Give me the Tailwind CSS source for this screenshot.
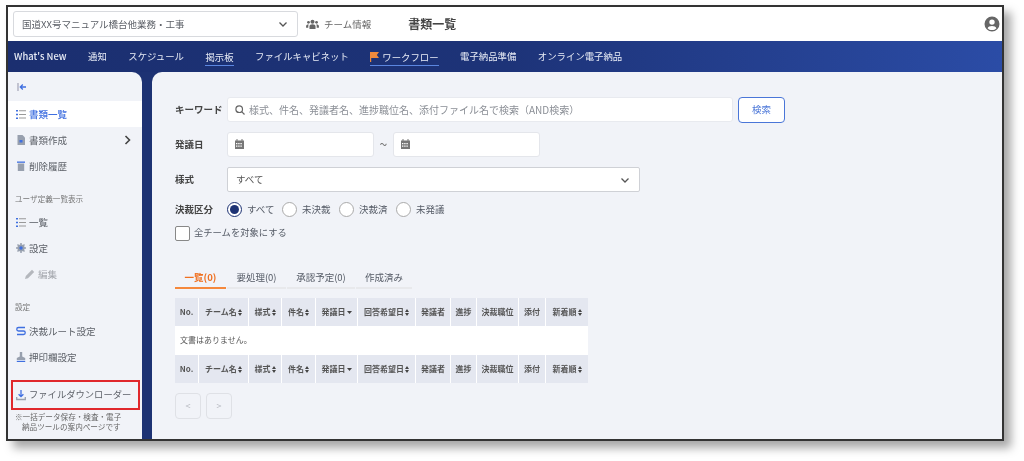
<!DOCTYPE html>
<html lang="ja">
<head>
    <meta charset="UTF-8">
    <title>書類一覧</title>
    <script src="https://cdn.jsdelivr.net/npm/@tailwindcss/browser@4"></script>
</head>
<body class="bg-white h-[461px] overflow-hidden pt-[5px] pl-[6px] font-['Noto_Sans_CJK_JP','Noto_Sans',sans-serif] text-[#555b66]">
    <div class="w-[998px] h-[436px] border-2 border-[#333] shadow-[7px_7px_9px_rgba(0,0,0,0.35)] bg-[#1d3273] flex flex-col overflow-hidden">

        <!-- header -->
        <header class="h-[34px] shrink-0 bg-white flex items-center pl-[5px] pr-[2px] blur-[0.4px]">
            <div class="w-[285px] h-[26px] border border-[#d8dade] rounded-[3px] flex items-center justify-between pl-2 pr-2 text-[9.5px] text-[#5b5f66]">
                <span>国道XX号マニュアル橋台他業務・工事</span>
                <svg class="w-3 h-3" viewBox="0 0 12 12" fill="none" stroke="#555" stroke-width="1.3"><path d="M2.5 4.5 6 8l3.500-3.500"/></svg>
            </div>
            <div class="ml-[8px] flex items-center gap-[5px] text-[9.5px] text-[#666]">
                <svg class="w-[13px] h-[11px]" viewBox="0 0 14 12" fill="#666"><circle cx="7" cy="3" r="2.2"/><circle cx="2.6" cy="3.6" r="1.5"/><circle cx="11.4" cy="3.6" r="1.5"/><path d="M3.7 11V8c0-1.6 1.3-2.4 3.3-2.4s3.3.8 3.3 2.4v3zM0 9.500V7.600c0-1 .9-1.700 2.600-1.700l.4.1c-.4.5-.6 1.200-.6 2v1.500zM14 9.500V7.600c0-1-.9-1.700-2.600-1.700l-.4.1c.4.5.6 1.200.6 2v1.500z"/></svg>
                <span>チーム情報</span>
            </div>
            <h1 class="ml-[37px] text-[12px] font-bold text-[#444]">書類一覧</h1>
            <svg class="ml-auto w-[16px] h-[16px]" viewBox="0 0 16 16" fill="#666"><path fill-rule="evenodd" d="M8 .5a7.500 7.500 0 1 1 0 15 7.500 7.500 0 0 1 0-15zM8 3.400a2.700 2.700 0 1 0 0 5.400 2.700 2.700 0 0 0 0-5.400zM3.600 12.200c1 1.300 2.600 1.900 4.400 1.900s3.400-.6 4.400-1.900c-.5-1.400-2.200-2.100-4.400-2.100s-3.900.7-4.400 2.100z"/></svg>
        </header>

        <!-- nav -->
        <nav class="h-[31px] shrink-0 bg-gradient-to-r from-[#1b2f70] via-[#1d3378] to-[#2b4ca6] flex items-center pl-[6px] gap-[21.5px] text-[9.4px] text-[#e8ecf6] blur-[0.4px]">
            <span class="font-medium">What's New</span>
            <span>通知</span>
            <span>スケジュール</span>
            <span class="border-b border-[#5b86e0] leading-[16px] mt-px">掲示板</span>
            <span>ファイルキャビネット</span>
            <span class="border-b border-[#5b86e0] leading-[16px] mt-px flex items-center gap-[3px]">
                <svg class="w-[9px] h-[10px]" viewBox="0 0 9 10" fill="#f08a3c"><path d="M0 0h9L6.800 3 9 6H1.200v4H0z"/></svg>
                ワークフロー
            </span>
            <span>電子納品準備</span>
            <span>オンライン電子納品</span>
        </nav>

        <div class="flex-1 flex min-h-0">
            <!-- sidebar -->
            <aside class="w-[134px] shrink-0 bg-[#f1f3f8] rounded-tr-[10px] text-[9.5px] text-[#5d6168] flex flex-col blur-[0.4px]">
                <div class="h-[29px] flex items-center pl-[9px]">
                    <svg class="w-[10px] h-[10px]" viewBox="0 0 10 10" fill="none" stroke="#3f6fe0" stroke-width="1.300"><path d="M1 1v8" stroke="#aab"/><path d="M9 5H3.500M5.800 2.500 3.300 5l2.500 2.500"/></svg>
                </div>
                <a class="h-[26px] bg-white flex items-center gap-[3px] pl-[8px] text-[#3f6fe0] font-medium">
                    <svg class="w-[10px] h-[9px]" viewBox="0 0 10 9" fill="#3f6fe0"><path d="M0 0h2v1.500H0zM0 3.700h2v1.500H0zM0 7.400h2v1.500H0z"/><path fill="#999" d="M3 .2h7v1H3zM3 3.900h7v1H3zM3 7.600h7v1H3z"/></svg>
                    書類一覧
                </a>
                <a class="h-[26px] flex items-center gap-[3px] pl-[8px]">
                    <svg class="w-[10px] h-[10px]" viewBox="0 0 10 10" fill="#98a0ae"><path d="M1.500 0h5L9 2.500V10H1.500z"/><path fill="#3f6fe0" d="M3.500 5h3v2.500h-3z"/></svg>
                    書類作成
                    <svg class="ml-auto mr-[11px] w-[7px] h-[10px]" viewBox="0 0 7 10" fill="none" stroke="#444" stroke-width="1.600"><path d="M1.500 1 5.500 5l-4 4"/></svg>
                </a>
                <a class="h-[26px] flex items-center gap-[3px] pl-[8px]">
                    <svg class="w-[10px] h-[10px]" viewBox="0 0 10 10" fill="#98a0ae"><path fill="#3f6fe0" d="M1 .5h8v1.300H1z"/><path d="M1.800 2.500h6.400V10H1.800z"/></svg>
                    削除履歴
                </a>
                <p class="mt-[14px] h-[16px] pl-[7px] text-[7.6px] leading-[12px] text-[#777]">ユーザ定義一覧表示</p>
                <a class="h-[26px] flex items-center gap-[3px] pl-[8px]">
                    <svg class="w-[10px] h-[9px]" viewBox="0 0 10 9" fill="#3f6fe0"><path d="M0 0h2v1.500H0zM0 3.700h2v1.500H0zM0 7.400h2v1.500H0z"/><path fill="#999" d="M3 .2h7v1H3zM3 3.900h7v1H3zM3 7.600h7v1H3z"/></svg>
                    一覧
                </a>
                <a class="h-[26px] flex items-center gap-[3px] pl-[8px]">
                    <svg class="w-[10px] h-[10px]" viewBox="0 0 10 10"><circle cx="5" cy="5" r="3.600" fill="#98a0ae"/><path stroke="#98a0ae" stroke-width="1.500" d="M5 0v10M0 5h10M1.500 1.500l7 7M8.500 1.500l-7 7"/><circle cx="5" cy="5" r="1.700" fill="#3f6fe0"/></svg>
                    設定
                </a>
                <a class="h-[26px] flex items-center gap-[3px] pl-[17px] text-[#a5a8ae]">
                    <svg class="w-[10px] h-[10px]" viewBox="0 0 10 10" fill="#b4b7bd"><path d="M0 10l.8-3L7 .8 9.200 3 3 9.200z"/></svg>
                    編集
                </a>
                <p class="mt-[14px] h-[17px] pl-[7px] text-[7.6px] leading-[12px] text-[#777]">設定</p>
                <a class="h-[26px] flex items-center gap-[3px] pl-[8px]">
                    <svg class="w-[10px] h-[10px]" viewBox="0 0 10 10" fill="none" stroke="#3f6fe0" stroke-width="1.300"><path d="M9 1.500H2.500a1.700 1.700 0 0 0 0 3.500h5a1.700 1.700 0 0 1 0 3.500H1"/></svg>
                    決裁ルート設定
                </a>
                <a class="h-[26px] flex items-center gap-[3px] pl-[8px]">
                    <svg class="w-[10px] h-[10px]" viewBox="0 0 10 10" fill="#98a0ae"><path d="M3.800 0h2.400v4.500l3 1.500v2H.8V6l3-1.500z"/><path fill="#3f6fe0" d="M.8 8.800h8.400V10H.8z"/></svg>
                    押印欄設定
                </a>
                <div class="mt-[10px] ml-[3px] mr-[2px] h-[30px] border-2 border-[#e0282c] flex items-center gap-[3px] pl-[3px]">
                    <svg class="w-[10px] h-[11px]" viewBox="0 0 10 11" fill="none" stroke="#3f6fe0" stroke-width="1.300"><path d="M5 0v6.500M2.600 4.300 5 6.700l2.400-2.400"/><path stroke="#98a0ae" d="M.7 7v2.500h8.600V7"/></svg>
                    <span class="whitespace-nowrap text-[9.3px]">ファイルダウンローダー</span>
                </div>
                <p class="mt-[2px] pl-[7px] text-[7.6px] leading-[10px] text-[#666] whitespace-nowrap">※一括データ保存・検査・電子</p>
                <p class="pl-[14px] text-[7.6px] leading-[10px] text-[#666] whitespace-nowrap">納品ツールの案内ページです</p>
            </aside>

            <!-- main -->
            <main class="ml-[10px] flex-1 bg-[#f1f3f8] rounded-tl-[10px] pl-[23px] pt-[25px] text-[9.5px] text-[#555b66] blur-[0.4px]">
                <div class="flex items-center h-[25px]">
                    <label class="w-[52px] font-bold text-[#444]">キーワード</label>
                    <div class="w-[506px] h-[25px] bg-white rounded-[3px] border border-[#e8eaef] flex items-center pl-[7px] gap-[4px] text-[10px] text-[#8b8f96]">
                        <svg class="w-[10px] h-[10px]" viewBox="0 0 10 10" fill="none" stroke="#666" stroke-width="1.200"><circle cx="4.200" cy="4.200" r="3.300"/><path d="M6.700 6.700 9.500 9.500"/></svg>
                        <span>様式、件名、発議者名、進捗職位名、添付ファイル名で検索（AND検索）</span>
                    </div>
                    <button class="ml-[5px] w-[47px] h-[26px] bg-white border border-[#4a76d8] rounded-[4px] text-[#4a76d8]">検索</button>
                </div>

                <div class="flex items-center h-[26px] mt-[9px]">
                    <label class="w-[52px] font-bold text-[#444]">発議日</label>
                    <div class="w-[147px] h-[25px] bg-white rounded-[3px] border border-[#e4e6eb] flex items-center pl-[7px]">
                        <svg class="w-[9px] h-[10px]" viewBox="0 0 9 10" fill="#777"><path d="M0 1.500h1.500V0h1v1.500h4V0h1v1.500H9V10H0z"/><path fill="#fff" d="M1 4h1.400v1.200H1zM3.200 4h1.400v1.200H3.200zM5.400 4h1.400v1.200H5.400zM1 6.500h1.400v1.200H1zM3.200 6.500h1.400v1.200H3.200zM5.400 6.500h1.400v1.200H5.400z"/></svg>
                    </div>
                    <span class="w-[19px] text-center text-[14px] text-[#777]">~</span>
                    <div class="w-[147px] h-[25px] bg-white rounded-[3px] border border-[#e4e6eb] flex items-center pl-[7px]">
                        <svg class="w-[9px] h-[10px]" viewBox="0 0 9 10" fill="#777"><path d="M0 1.500h1.500V0h1v1.500h4V0h1v1.500H9V10H0z"/><path fill="#fff" d="M1 4h1.400v1.200H1zM3.200 4h1.400v1.200H3.200zM5.400 4h1.400v1.200H5.400zM1 6.500h1.400v1.200H1zM3.200 6.500h1.400v1.200H3.200zM5.400 6.500h1.400v1.200H5.400z"/></svg>
                    </div>
                </div>

                <div class="flex items-center h-[25px] mt-[10px]">
                    <label class="w-[52px] font-bold text-[#444]">様式</label>
                    <div class="w-[413px] h-[25px] bg-white rounded-[2px] border border-[#cfd1d6] flex items-center justify-between px-2 text-[#555]">
                        <span>すべて</span>
                        <svg class="w-3 h-3" viewBox="0 0 12 12" fill="none" stroke="#555" stroke-width="1.3"><path d="M2.500 4.500 6 8l3.500-3.500"/></svg>
                    </div>
                </div>

                <div class="flex items-center h-[16px] mt-[9px] whitespace-nowrap">
                    <label class="w-[52px] font-bold text-[#444]">決裁区分</label>
                    <span class="w-[15px] h-[15px] rounded-full border border-[#1d3273] bg-white flex items-center justify-center"><span class="w-[9px] h-[9px] rounded-full bg-[#1d3273]"></span></span>
                    <span class="ml-[5px] w-[26px]">すべて</span>
                    <span class="ml-[9px] w-[15px] h-[15px] rounded-full border border-[#aaa] bg-white"></span>
                    <span class="ml-[5px] w-[28px]">未決裁</span>
                    <span class="ml-[9px] w-[15px] h-[15px] rounded-full border border-[#aaa] bg-white"></span>
                    <span class="ml-[5px] w-[28px]">決裁済</span>
                    <span class="ml-[9px] w-[15px] h-[15px] rounded-full border border-[#aaa] bg-white"></span>
                    <span class="ml-[5px]">未発議</span>
                </div>

                <div class="flex items-center h-[16px] mt-[8px]">
                    <span class="w-[15px] h-[15px] rounded-[2px] border border-[#888] bg-white"></span>
                    <span class="ml-[4px] text-[9.3px]">全チームを対象にする</span>
                </div>

                <!-- tabs -->
                <div class="flex gap-[1px] mt-[29px] h-[19px] text-center">
                    <span class="w-[51px] border-b-2 border-[#f5883c] text-[#f07020] font-bold">一覧(0)</span>
                    <span class="w-[59px] border-b-2 border-[#e8e9ec]">要処理(0)</span>
                    <span class="w-[68px] border-b-2 border-[#e8e9ec]">承認予定(0)</span>
                    <span class="w-[56px] border-b-2 border-[#e8e9ec]">作成済み</span>
                </div>

                <!-- table -->
                <table class="mt-[9px] w-[413px] table-fixed border-separate border-spacing-0 text-[8px] leading-[12px] text-[#555]">
                    <colgroup>
                        <col class="w-[24px]"><col class="w-[50px]"><col class="w-[33px]"><col class="w-[34px]"><col class="w-[42px]"><col class="w-[58px]"><col class="w-[35px]"><col class="w-[26px]"><col class="w-[42px]"><col class="w-[27px]"><col class="w-[42px]">
                    </colgroup>
                    <thead>
                        <tr class="h-[28px] font-bold text-center whitespace-nowrap">
                            <th class="bg-[#e4e7f0] border-r border-white">No.</th>
                            <th class="bg-[#e4e7f0] border-r border-white">チーム名<svg class="inline w-[4px] h-[7px] ml-px" viewBox="0 0 4 7" fill="#444"><path d="M2 0l2 3H0zM2 7l2-3H0z"/></svg></th>
                            <th class="bg-[#e4e7f0] border-r border-white">様式<svg class="inline w-[4px] h-[7px] ml-px" viewBox="0 0 4 7" fill="#444"><path d="M2 0l2 3H0zM2 7l2-3H0z"/></svg></th>
                            <th class="bg-[#e4e7f0] border-r border-white">件名<svg class="inline w-[4px] h-[7px] ml-px" viewBox="0 0 4 7" fill="#444"><path d="M2 0l2 3H0zM2 7l2-3H0z"/></svg></th>
                            <th class="bg-[#e4e7f0] border-r border-white">発議日<svg class="inline w-[5px] h-[3px] ml-px" viewBox="0 0 5 3" fill="#444"><path d="M0 0h5L2.500 3z"/></svg></th>
                            <th class="bg-[#e4e7f0] border-r border-white">回答希望日<svg class="inline w-[4px] h-[7px] ml-px" viewBox="0 0 4 7" fill="#444"><path d="M2 0l2 3H0zM2 7l2-3H0z"/></svg></th>
                            <th class="bg-[#e4e7f0] border-r border-white">発議者</th>
                            <th class="bg-[#e4e7f0] border-r border-white">進捗</th>
                            <th class="bg-[#e4e7f0] border-r border-white">決裁職位</th>
                            <th class="bg-[#e4e7f0] border-r border-white">添付</th>
                            <th class="bg-[#e4e7f0]">新着順<svg class="inline w-[4px] h-[7px] ml-px" viewBox="0 0 4 7" fill="#444"><path d="M2 0l2 3H0zM2 7l2-3H0z"/></svg></th>
                        </tr>
                    </thead>
                    <tbody>
                        <tr class="h-[29px]"><td colspan="11" class="bg-white pl-[5px] text-[8px] border-b border-white">文書はありません。</td></tr>
                    </tbody>
                    <tfoot>
                        <tr class="h-[28px] font-bold text-center whitespace-nowrap">
                            <th class="bg-[#e4e7f0] border-r border-white">No.</th>
                            <th class="bg-[#e4e7f0] border-r border-white">チーム名<svg class="inline w-[4px] h-[7px] ml-px" viewBox="0 0 4 7" fill="#444"><path d="M2 0l2 3H0zM2 7l2-3H0z"/></svg></th>
                            <th class="bg-[#e4e7f0] border-r border-white">様式<svg class="inline w-[4px] h-[7px] ml-px" viewBox="0 0 4 7" fill="#444"><path d="M2 0l2 3H0zM2 7l2-3H0z"/></svg></th>
                            <th class="bg-[#e4e7f0] border-r border-white">件名<svg class="inline w-[4px] h-[7px] ml-px" viewBox="0 0 4 7" fill="#444"><path d="M2 0l2 3H0zM2 7l2-3H0z"/></svg></th>
                            <th class="bg-[#e4e7f0] border-r border-white">発議日<svg class="inline w-[5px] h-[3px] ml-px" viewBox="0 0 5 3" fill="#444"><path d="M0 0h5L2.500 3z"/></svg></th>
                            <th class="bg-[#e4e7f0] border-r border-white">回答希望日<svg class="inline w-[4px] h-[7px] ml-px" viewBox="0 0 4 7" fill="#444"><path d="M2 0l2 3H0zM2 7l2-3H0z"/></svg></th>
                            <th class="bg-[#e4e7f0] border-r border-white">発議者</th>
                            <th class="bg-[#e4e7f0] border-r border-white">進捗</th>
                            <th class="bg-[#e4e7f0] border-r border-white">決裁職位</th>
                            <th class="bg-[#e4e7f0] border-r border-white">添付</th>
                            <th class="bg-[#e4e7f0]">新着順<svg class="inline w-[4px] h-[7px] ml-px" viewBox="0 0 4 7" fill="#444"><path d="M2 0l2 3H0zM2 7l2-3H0z"/></svg></th>
                        </tr>
                    </tfoot>
                </table>

                <!-- pager -->
                <div class="flex gap-[5px] mt-[10px]">
                    <button class="w-[26px] h-[26px] border border-[#dfe1e6] rounded-[4px] text-[#b8bbc2] text-[9px]">&lt;</button>
                    <button class="w-[26px] h-[26px] border border-[#dfe1e6] rounded-[4px] text-[#b8bbc2] text-[9px]">&gt;</button>
                </div>
            </main>
        </div>
    </div>
</body>
</html>
